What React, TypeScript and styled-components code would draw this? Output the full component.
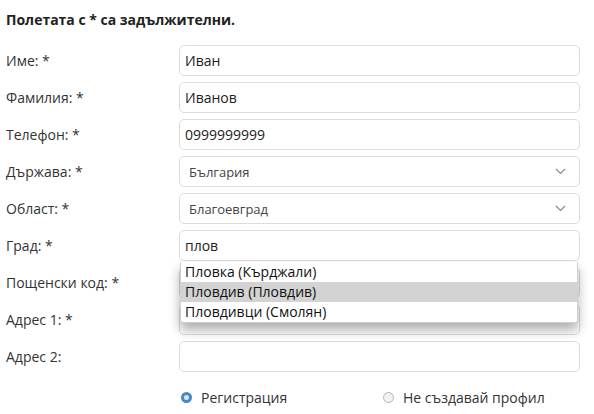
import styled, { createGlobalStyle } from "styled-components";

const GlobalStyle = createGlobalStyle`
  html, body {
    margin: 0;
    padding: 0;
    background: #fff;
  }
  body {
    font-family: "Open Sans", "Noto Sans", sans-serif;
    color: #333;
  }
`;

const cities = [
  { name: "Пловка (Кърджали)", active: false },
  { name: "Пловдив (Пловдив)", active: true },
  { name: "Пловдивци (Смолян)", active: false },
];

const Chevron = () => (
  <svg width="11" height="7" viewBox="0 0 11 7" fill="none">
    <path d="M1 1l4.5 4.5L10 1" stroke="#8a8a8a" strokeWidth="1.2" />
  </svg>
);

export default function App() {
  return (
    <>
      <GlobalStyle />
      <Form>
        <Title>Полетата с * са задължителни.</Title>
        <Grid>
          <Label>Име: *</Label>
          <Input readOnly value="Иван" />

          <Label>Фамилия: *</Label>
          <Input readOnly value="Иванов" />

          <Label>Телефон: *</Label>
          <Input readOnly value="0999999999" />

          <Label>Държава: *</Label>
          <SelectBox>
            <span>България</span>
            <Chevron />
          </SelectBox>

          <Label>Област: *</Label>
          <SelectBox>
            <span>Благоевград</span>
            <Chevron />
          </SelectBox>

          <Label>Град: *</Label>
          <Field>
            <Input readOnly value="плов" />
            <Suggestions>
              {cities.map((c) => (
                <Suggestion key={c.name} $active={c.active}>
                  {c.name}
                </Suggestion>
              ))}
            </Suggestions>
          </Field>

          <Label>Пощенски код: *</Label>
          <Input readOnly value="" />

          <Label>Адрес 1: *</Label>
          <Input readOnly value="" />

          <Label>Адрес 2:</Label>
          <Input readOnly value="" />
        </Grid>
        <RadioRow>
          <RadioOption>
            <RadioDot $checked />
            Регистрация
          </RadioOption>
          <RadioOption>
            <RadioDot />
            Не създавай профил
          </RadioOption>
        </RadioRow>
      </Form>
    </>
  );
}

const Form = styled.div`
  padding: 10px 6px 0;
  width: 580px;
`;

const Title = styled.div`
  font-size: 14px;
  font-weight: 700;
  line-height: 20px;
  color: #222;
  margin-bottom: 15px;
`;

const Grid = styled.div`
  display: grid;
  grid-template-columns: 173px 401px;
  grid-auto-rows: 31px;
  row-gap: 6px;
  align-items: center;
`;

const Label = styled.div`
  font-size: 14px;
  line-height: 20px;
  color: #333;
`;

const Field = styled.div`
  position: relative;
  height: 31px;
`;

const Input = styled.input`
  display: block;
  box-sizing: border-box;
  width: 100%;
  height: 31px;
  margin: 0;
  padding: 0 5px;
  border: 1px solid #dcdcdc;
  border-radius: 5px;
  background: #fff;
  font-family: "Open Sans", "Noto Sans", sans-serif;
  font-size: 14px;
  color: #222;
  outline: none;
`;

const SelectBox = styled.div`
  box-sizing: border-box;
  height: 31px;
  display: flex;
  align-items: center;
  justify-content: space-between;
  padding: 0 13px 0 9px;
  border: 1px solid #dcdcdc;
  border-radius: 5px;
  background: #fff;
  font-size: 13px;
  color: #444;
`;

const Suggestions = styled.div`
  position: absolute;
  top: 32px;
  left: 1px;
  right: 2px;
  z-index: 10;
  background: #fff;
  border: 1px solid #cfcfcf;
  border-top: none;
  border-radius: 0 0 4px 4px;
  box-shadow: 0 7px 12px rgba(0, 0, 0, 0.32);
  overflow: hidden;
`;

const Suggestion = styled.div<{ $active?: boolean }>`
  height: 20px;
  line-height: 20px;
  padding-left: 4px;
  font-size: 14px;
  color: #111;
  background: ${({ $active }) => ($active ? "#d3d3d3" : "#fff")};
  white-space: nowrap;
`;

const RadioRow = styled.div`
  display: grid;
  grid-template-columns: 202px 1fr;
  height: 30px;
  margin: 10px 0 0 173px;
  align-items: center;
`;

const RadioOption = styled.label`
  display: flex;
  align-items: center;
  gap: 9px;
  padding-left: 2px;
  font-size: 14px;
  color: #333;
`;

const RadioDot = styled.span<{ $checked?: boolean }>`
  box-sizing: border-box;
  width: 11px;
  height: 11px;
  border-radius: 50%;
  flex-shrink: 0;
  border: ${({ $checked }) =>
    $checked ? "3px solid #4a86c8" : "1px solid #b5b5b5"};
  background: ${({ $checked }) => ($checked ? "#dbe8f6" : "#f2f2f2")};
`;
